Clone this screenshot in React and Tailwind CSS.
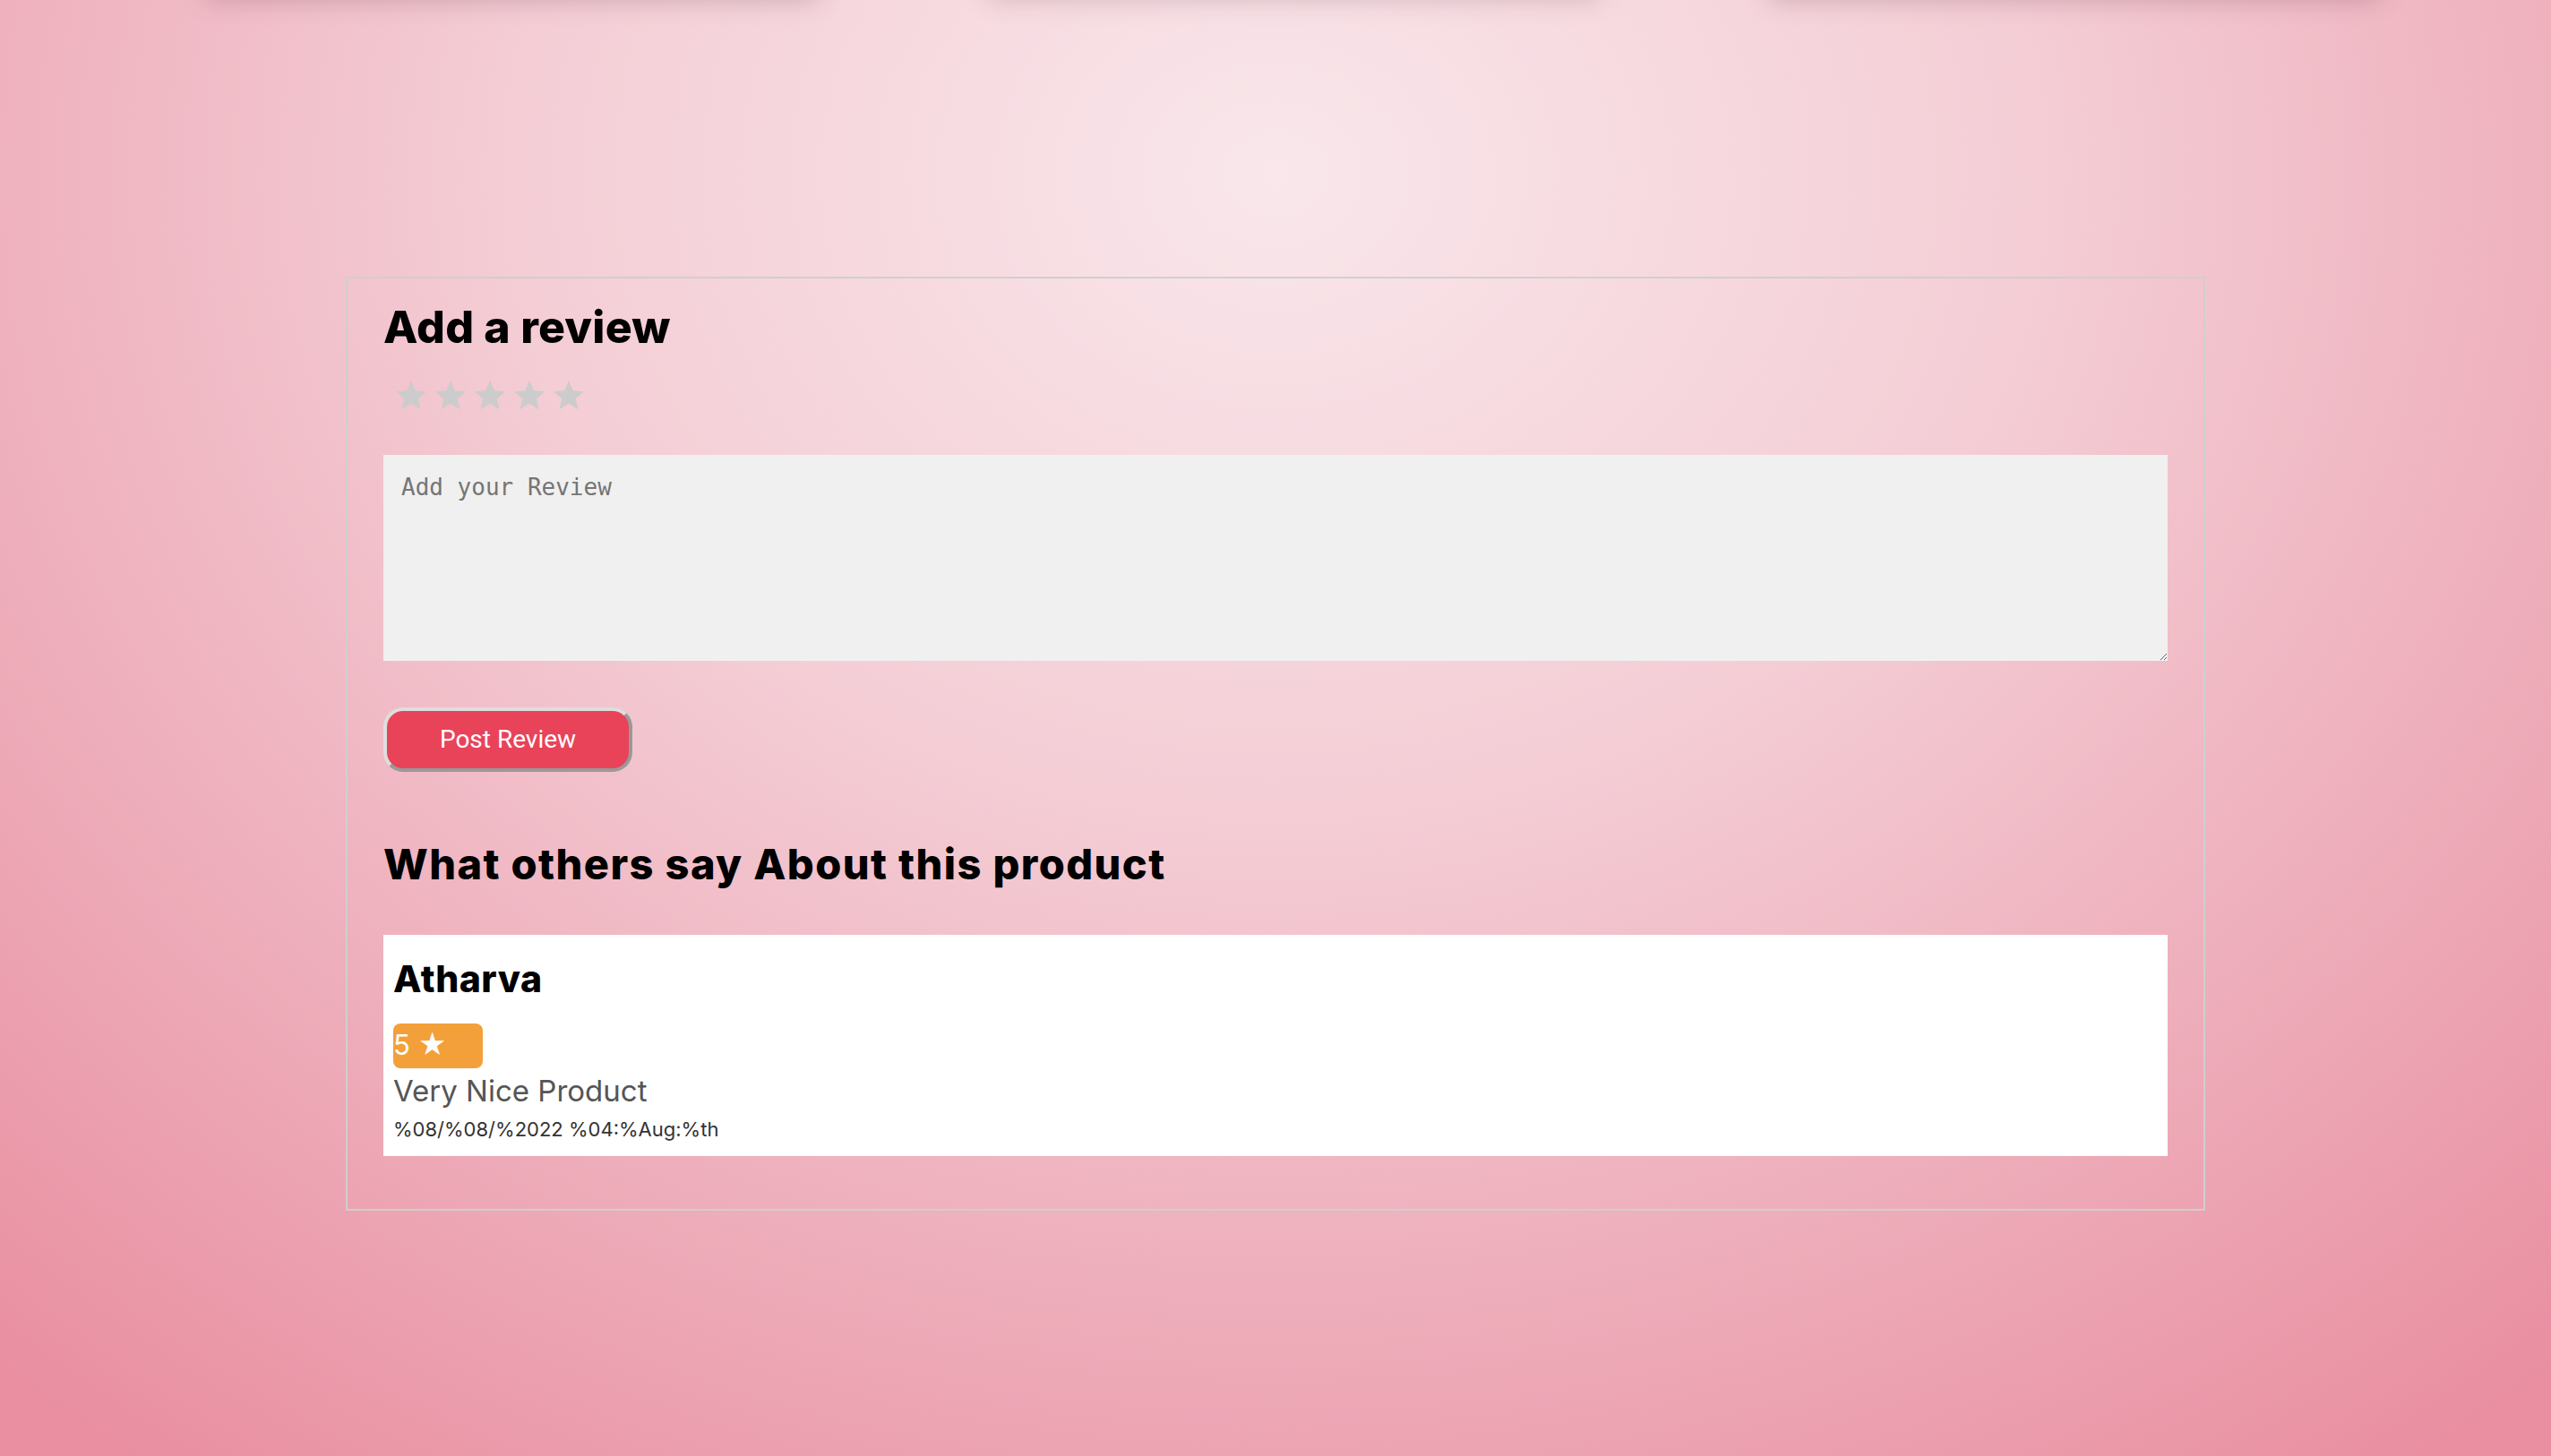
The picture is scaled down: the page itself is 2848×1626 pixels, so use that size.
function StarIcon({ className }) {
  return (
    <svg viewBox="0 0 24 24" className={className} fill="currentColor">
      <path d="M12 1.8l3.05 7.2 7.75.62-5.9 5.08 1.8 7.6L12 18.2l-6.7 4.1 1.8-7.6-5.9-5.08 7.75-.62z" />
    </svg>
  );
}

const reviews = [
  {
    name: 'Atharva',
    rating: 5,
    comment: 'Very Nice Product',
    date: '%08/%08/%2022 %04:%Aug:%th',
  },
];

function App() {
  return (
    <div className="min-h-screen w-full flex flex-col overflow-hidden bg-[radial-gradient(ellipse_75%_110%_at_50%_12%,#f9e7eb_0%,#f4cdd5_40%,#eeaebb_70%,#e98fa1_100%)] font-['Inter',sans-serif]">
      {/* cards above the fold, only their shadow is visible */}
      <div className="flex justify-center gap-[191px] pl-[40px] -mt-[80px] h-[70px]">
        <div className="w-[681px] h-[70px] bg-[#f0c8d0] shadow-[0_8px_30px_rgba(110,60,75,0.32)]" />
        <div className="w-[681px] h-[70px] bg-[#f6e2e6] shadow-[0_8px_30px_rgba(110,60,75,0.26)]" />
        <div className="w-[681px] h-[70px] bg-[#f0c8d0] shadow-[0_8px_30px_rgba(110,60,75,0.32)]" />
      </div>

      <div className="mx-auto mt-[319px] w-[2076px] border-2 border-[#cfcfcf] px-[40px] pt-[24px] pb-[59px]">
        <h2 className="text-[50px] leading-[60px] font-extrabold text-black tracking-[0.2px]">Add a review</h2>

        <div className="mt-[27px] flex gap-[6px] pl-[12px] text-[#cccccc]">
          {[1, 2, 3, 4, 5].map((i) => (
            <StarIcon key={i} className="w-[38px] h-[38px]" />
          ))}
        </div>

        <textarea
          placeholder="Add your Review"
          className="mt-[48px] block w-full h-[230px] bg-[#f0f0f0] px-[20px] pt-[17px] pb-[20px] font-['DejaVu_Sans_Mono',monospace] text-[26px] text-[#333] placeholder:text-[#757575] outline-none"
        />

        <button className="mt-[52px] w-[278px] h-[72px] rounded-[22px] border-4 border-t-[#dedede] border-l-[#dedede] border-b-[#999999] border-r-[#999999] bg-[#e9435a] text-white text-[28px] font-['Roboto',sans-serif]">
          Post Review
        </button>

        <h2 className="mt-[75px] text-[47px] leading-[56px] font-extrabold text-black tracking-[1.4px]">
          What others say About this product
        </h2>

        <div className="mt-[51px] flex flex-col gap-4">
          {reviews.map((r) => (
            <div key={r.name} className="bg-white pl-[11px] pt-[25px] pb-[15px] h-[247px]">
              <h3 className="text-[41px] leading-[48px] font-extrabold text-black tracking-[0.5px]">{r.name}</h3>
              <div className="mt-[26px] w-[100px] h-[50px] rounded-lg bg-[#f3a03a] text-white text-[31px] leading-[48px]">
                {r.rating} ★
              </div>
              <p className="mt-[6px] text-[33px] leading-[38px] text-[#555]">{r.comment}</p>
              <p className="mt-[8px] text-[22px] leading-[32px] text-[#333]">{r.date}</p>
            </div>
          ))}
        </div>
      </div>
    </div>
  );
}

export default App;
